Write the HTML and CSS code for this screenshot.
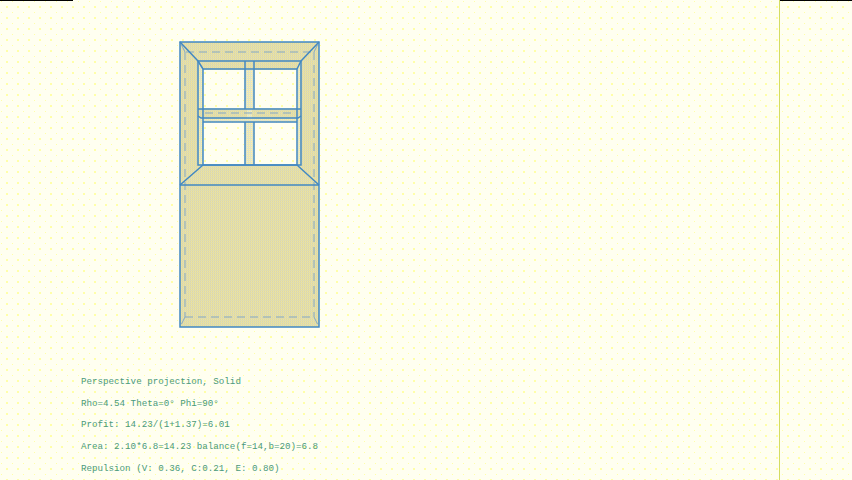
FILE: index.html
```html
<!DOCTYPE html>
<html lang="en">
<head>
<meta charset="utf-8">
<title>Perspective projection</title>
<link rel="stylesheet" href="styles.css">
</head>
<body>
<div class="page">
  <main class="view">
    <div class="tab"></div>
    <svg class="door" width="160" height="300" viewBox="170 30 160 300" aria-label="Door drawing">
      <defs>
        <pattern id="tan" width="2" height="2" patternUnits="userSpaceOnUse">
          <rect width="2" height="2" fill="#ece4a0"/>
          <rect width="1" height="1" fill="#dcdab8"/>
          <rect x="1" width="1" height="1" fill="#e4dea4"/>
          <rect y="1" width="1" height="1" fill="#dcd8a8"/>
        </pattern>
        <pattern id="light" width="2" height="2" patternUnits="userSpaceOnUse">
          <rect width="2" height="2" fill="#eee8b0"/>
          <rect width="1" height="1" fill="#d4e0e0"/>
          <rect x="1" y="1" width="1" height="1" fill="#f4eeb8"/>
        </pattern>
      </defs>
      <path class="tan" fill-rule="evenodd" d="M180 42H319V185H180ZM198 61V165H301V61Z"/>
      <rect class="tan" x="180" y="185" width="139" height="142"/>
      <path class="light" fill-rule="evenodd" d="M198 61H301V165H198ZM203 70V108H245V70ZM254 70V108H297V70ZM203 122V165H245V122ZM254 122V165H297V122Z"/>
      <path class="tan" d="M198 61H301L297 69H203ZM198 109H301V116L298 118H201L198 116ZM180 185L203 165H297L319 185Z"/>
      <rect class="light" x="247" y="70" width="5" height="95"/>
      <g class="dash">
        <path d="M186 52H314"/>
        <path d="M185 52V317"/>
        <path d="M314 52V317"/>
        <path d="M185 317H314"/>
        <path d="M205 113H295"/>
        <path d="M185 317L180 327M314 317L319 327M185 52L180 42M314 52L319 42"/>
      </g>
      <g class="line">
        <rect x="180" y="42" width="139" height="285"/>
        <path d="M180 185H319"/>
        <path d="M180 42L198 61M319 42L301 61M180 185L203 165M319 185L297 165"/>
        <path d="M198 61H301V165H198Z"/>
        <path d="M203 69H297V165H203Z"/>
        <path d="M245 61V109M254 61V109M245 122V165M254 122V165"/>
        <path d="M198 109H301M203 122H297M198 116L201 118H298L301 116"/>
        <path d="M198 61L203 69M301 61L297 69"/>
      </g>
    </svg>
    <div class="info">
      <p>Perspective projection, Solid</p>
      <p>Rho=4.54 Theta=0° Phi=90°</p>
      <p>Profit: 14.23/(1+1.37)=6.01</p>
      <p>Area: 2.10*6.8=14.23 balance(f=14,b=20)=6.8</p>
      <p>Repulsion (V: 0.36, C:0.21, E: 0.80)</p>
    </div>
  </main>
  <aside class="side"></aside>
</div>
</body>
</html>
```
FILE: styles.css
```css
html, body {
  margin: 0;
  padding: 0;
  height: 480px;
  overflow: hidden;
  background: #fff;
}
.page {
  display: flex;
  width: 852px;
  height: 480px;
  overflow: hidden;
  background-color: #fffff0;
  background-image:
    radial-gradient(circle at 1.5px 1.5px, #ffffa8 0.9px, transparent 0.9px),
    radial-gradient(circle at 7px 7px, #ffffa8 0.9px, transparent 0.9px);
  background-size: 11px 11px;
}
.view {
  position: relative;
  width: 779px;
  height: 480px;
  border-right: 1px solid #d4dc60;
}
.tab {
  width: 73px;
  height: 1px;
  background: #000;
}
.door {
  display: block;
  margin: 29px 0 0 170px;
}
.info {
  margin: 46px 0 0 81px;
  font-family: "Liberation Mono", monospace;
  font-size: 9.2px;
  line-height: 11px;
  color: #4a9a7c;
}
.info p {
  margin: 0 0 10.7px;
  white-space: nowrap;
}
.side {
  flex: 1;
  height: 0;
  border-top: 1px solid #000;
}
.tan { fill: url(#tan); }
.light { fill: url(#light); }
.line {
  fill: none;
  stroke: #4288c2;
  stroke-width: 1.5;
}
.dash {
  fill: none;
  stroke: #84a8c4;
  stroke-width: 1;
  stroke-dasharray: 8 5;
}
```
